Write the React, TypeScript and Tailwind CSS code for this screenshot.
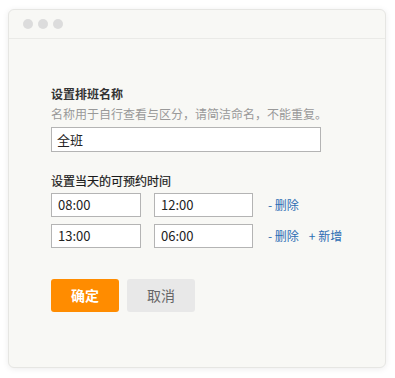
export default function App() {
  const rows = [
    { start: "08:00", end: "12:00", add: false },
    { start: "13:00", end: "06:00", add: true },
  ];

  return (
    <div
      className="w-[395px] h-[378px] bg-white pt-[9px] pl-[8px]"
      style={{ fontFamily: '"Noto Sans CJK SC", "Liberation Sans", sans-serif' }}
    >
      <div className="w-[378px] h-[359px] rounded-[6px] bg-[#f8f8f5] border border-[#e6e6e3] shadow-[0_1px_6px_rgba(0,0,0,0.08)] overflow-hidden">
        <div className="h-[29px] flex items-center gap-[5px] pl-[14px] border-b border-[#eaeae7]">
          <span className="w-[10px] h-[10px] rounded-full bg-[#dcdcdc]" />
          <span className="w-[10px] h-[10px] rounded-full bg-[#dcdcdc]" />
          <span className="w-[10px] h-[10px] rounded-full bg-[#dcdcdc]" />
        </div>

        <div className="pl-[42px] pt-[46px]">
          <div className="text-[12px] leading-[18px] font-bold text-[#333]">设置排班名称</div>
          <div className="text-[12px] leading-[18px] text-[#999] mt-[2px]">
            名称用于自行查看与区分，请简洁命名，不能重复。
          </div>
          <div className="mt-[4px] w-[270px] h-[25px] border border-[#b4b4b4] bg-white flex items-center px-[5px] text-[13px] text-[#222]">
            全班
          </div>

          <div className="mt-[20px] text-[12px] leading-[18px] text-[#1a1a1a] [-webkit-text-stroke:0.2px_#1a1a1a]">
            设置当天的可预约时间
          </div>
          <div className="mt-[3px] flex flex-col gap-[7px]">
            {rows.map((r) => (
              <div key={r.start} className="flex items-center">
                <div className="w-[90px] h-[24px] border border-[#b4b4b4] bg-white flex items-center px-[6px] text-[13px] text-[#222]">
                  {r.start}
                </div>
                <div className="ml-[13px] w-[99px] h-[24px] border border-[#b4b4b4] bg-white flex items-center px-[6px] text-[13px] text-[#222]">
                  {r.end}
                </div>
                <span className="ml-[15px] text-[12px] text-[#2c6db3]">- 删除</span>
                {r.add && <span className="ml-[10px] text-[12px] text-[#2c6db3]">+ 新增</span>}
              </div>
            ))}
          </div>

          <div className="mt-[31px] flex gap-[8px]">
            <button className="w-[68px] h-[33px] rounded-[3px] bg-[#ff8c00] text-white text-[14px] font-bold">
              确定
            </button>
            <button className="w-[68px] h-[33px] rounded-[3px] bg-[#e8e8e8] text-[#666] text-[14px]">
              取消
            </button>
          </div>
        </div>
      </div>
    </div>
  );
}
